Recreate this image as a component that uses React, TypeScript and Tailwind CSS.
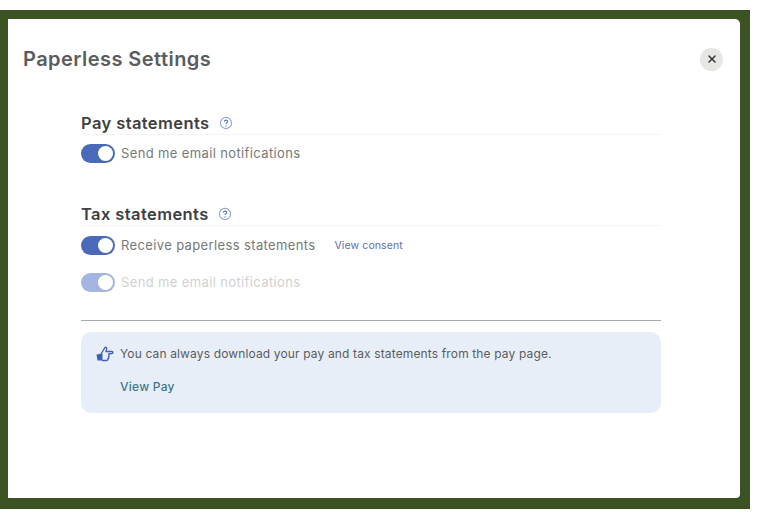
import { X } from "lucide-react";

function Toggle({ disabled }: { disabled?: boolean }) {
  return (
    <div
      className={`flex h-[19px] w-[34px] shrink-0 items-center justify-end rounded-full pr-[2px] ${
        disabled ? "bg-[#a3b5e0]" : "bg-[#4a69b8]"
      }`}
    >
      <div className="h-[15px] w-[15px] rounded-full bg-white" />
    </div>
  );
}

function HelpIcon() {
  return (
    <svg width="14" height="14" viewBox="0 0 14 14" fill="none" className="shrink-0">
      <circle cx="7" cy="7" r="5.6" stroke="#8ea3d6" strokeWidth="1.1" />
      <path
        d="M5.3 5.6C5.4 4.6 6.1 4.1 7 4.1c1 0 1.7.6 1.7 1.4 0 1.3-1.7 1.3-1.7 2.6"
        stroke="#5d78bd"
        strokeWidth="1.1"
      />
      <circle cx="7" cy="9.9" r="0.7" fill="#5d78bd" />
    </svg>
  );
}

function ThumbIcon() {
  return (
    <svg width="18" height="16" viewBox="0 0 18 16" fill="none" className="shrink-0">
      <path d="M0.5 8.5 6.5 7.5v7h-5z" fill="#3f5fb0" />
      <path d="M5 8 9 1.5c1-.8 2 .2 1.6 1.2L10 5.5h5.8c1.5 0 1.5 2.2 0 2.2h-3.3" stroke="#3f5fb0" strokeWidth="1.3" />
      <path d="M6 14.5h4.5c1.2 0 1.7-1 1.4-1.8 1-.4 1.2-1.5.7-2.2.7-.6.6-2-.1-2.8" stroke="#3f5fb0" strokeWidth="1.3" />
    </svg>
  );
}

export default function App() {
  return (
    <div className="h-[517px] w-[759px] bg-white pt-[10px] font-['Inter','Noto_Sans',sans-serif]">
      <div className="h-[499px] w-[750px] bg-[#3b5323] pb-[11px] pl-[8px] pr-[10px] pt-[9px]">
        <div className="h-full rounded-tr-[5px] rounded-br-[4px] bg-white">
          <div className="flex items-center justify-between pl-[15px] pr-[17px] pt-[28px]">
            <h1 className="text-[20px] font-semibold leading-[24px] tracking-[0.45px] text-[#5a5c5e]">
              Paperless Settings
            </h1>
            <button className="flex h-[23px] w-[23px] items-center justify-center rounded-full bg-[#e6e6e4]">
              <X className="h-[12px] w-[12px] text-[#333]" strokeWidth={3} />
            </button>
          </div>

          <div className="ml-[73px] mt-[40px] w-[580px]">
            <div className="flex h-[24px] items-center gap-[9px] border-b border-[#f4f4f4]">
              <h2 className="text-[16.5px] font-semibold leading-[20px] tracking-[0.4px] text-[#3e4042]">Pay statements</h2>
              <HelpIcon />
            </div>
            <div className="mt-[9px] flex items-center gap-[6px]">
              <Toggle />
              <span className="text-[13px] leading-[19px] tracking-[0.37px] text-[#77797b]">Send me email notifications</span>
            </div>

            <div className="mt-[39px] flex h-[24px] items-center gap-[9px] border-b border-[#f4f4f4]">
              <h2 className="text-[16.5px] font-semibold leading-[20px] tracking-[0.4px] text-[#3e4042]">Tax statements</h2>
              <HelpIcon />
            </div>
            <div className="mt-[10px] flex items-center gap-[6px]">
              <Toggle />
              <span className="text-[13px] leading-[19px] tracking-[0.37px] text-[#77797b]">Receive paperless statements</span>
              <a className="ml-[13px] text-[10.5px] leading-[19px] tracking-[0.1px] text-[#5a70ad]">View consent</a>
            </div>
            <div className="mt-[18px] flex items-center gap-[6px]">
              <Toggle disabled />
              <span className="text-[13px] leading-[19px] tracking-[0.37px] text-[#cfd1d2]">Send me email notifications</span>
            </div>

            <div className="mt-[28px] h-px bg-[#a9a9a7]" />

            <div className="mt-[11px] h-[81px] rounded-[10px] bg-[#e8eef8] pl-[15px] pt-[14px]">
              <div className="flex items-center gap-[6px]">
                <ThumbIcon />
                <span className="text-[12px] leading-[16px] tracking-[0.14px] text-[#5a5c5e]">
                  You can always download your pay and tax statements from the pay page.
                </span>
              </div>
              <a className="ml-[24px] mt-[17px] block text-[12px] font-medium leading-[16px] tracking-[0.25px] text-[#3b7a88]">View Pay</a>
            </div>
          </div>
        </div>
      </div>
    </div>
  );
}
